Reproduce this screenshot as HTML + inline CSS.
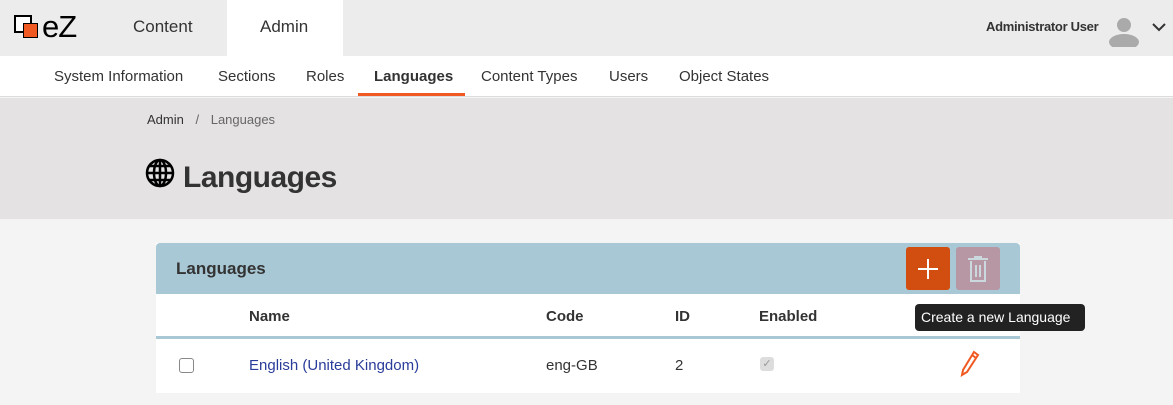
<!DOCTYPE html>
<html><head><style>
*{box-sizing:border-box;margin:0;padding:0}
body{width:1173px;height:405px;overflow:hidden;background:#f4f4f4;font-family:"Liberation Sans",sans-serif;color:#333;position:relative}
.top{position:absolute;left:0;top:0;width:1173px;height:56px;background:#ececec}
.a{position:absolute}
.sub{position:absolute;top:56px;left:0;width:1173px;height:41px;background:#fff;border-bottom:1px solid #ddd}
.sub span{position:absolute;top:12px;font-size:15px;color:#333}
.hdr{position:absolute;top:98px;left:0;width:1173px;height:121px;background:#e4e2e3}
.panel{position:absolute;left:156px;top:243px;width:864px;height:150px;background:#fff}
</style></head><body>
<div class="top"></div>
<div class="a" style="left:14px;top:15px;width:18px;height:18px;border:2px solid #000;background:#fff"></div>
<div class="a" style="left:23px;top:23px;width:15px;height:15px;background:#f05a22;border:1px solid #000"></div>
<div class="a" style="left:42px;top:9px;font-size:31px;color:#000;letter-spacing:-1px">eZ</div>
<div class="a" style="left:133px;top:17px;font-size:17px;color:#333">Content</div>
<div class="a" style="left:227px;top:0;width:116px;height:56px;background:#fff"></div>
<div class="a" style="left:260px;top:17px;font-size:17px;color:#333">Admin</div>
<div class="a" style="left:986px;top:19px;font-size:13px;font-weight:bold;color:#333;letter-spacing:-0.3px">Administrator User</div>
<svg class="a" style="left:1107px;top:16px" width="34" height="31"><circle cx="17" cy="9" r="7" fill="#aaa"/><ellipse cx="17" cy="26" rx="15" ry="8" fill="#aaa"/></svg>
<svg class="a" style="left:1151px;top:21px" width="16" height="12"><path d="M2 3l6 6 6-6" stroke="#333" stroke-width="2" fill="none"/></svg>
<div class="sub">
<span style="left:54px">System Information</span><span style="left:218px">Sections</span><span style="left:306px">Roles</span>
<span style="left:374px;font-weight:bold">Languages</span><span style="left:481px">Content Types</span><span style="left:609px">Users</span><span style="left:679px">Object States</span>
<div class="a" style="left:358px;top:37px;width:107px;height:3px;background:#f05a22"></div>
</div>
<div class="hdr">
<div class="a" style="left:147px;top:14px;font-size:13px;color:#333">Admin <span style="color:#666;margin:0 8px">/</span> <span style="color:#666">Languages</span></div>
<svg class="a" style="left:145px;top:60px" width="30" height="30" viewBox="0 0 30 30"><g fill="none" stroke="#000" stroke-width="2.5"><circle cx="15" cy="15" r="13"/><ellipse cx="15" cy="15" rx="6" ry="13"/><path d="M15 2v26M2 15h26M4 8h22M4 22h22"/></g></svg>
<div class="a" style="left:183px;top:63px;font-size:30px;font-weight:bold;color:#333;letter-spacing:-0.5px">Languages</div>
</div>
<div class="panel">
<div class="a" style="left:0;top:0;width:864px;height:51px;background:#a8c8d5;border-radius:4px 4px 0 0"></div>
<div class="a" style="left:20px;top:16px;font-size:17px;font-weight:bold;color:#333">Languages</div>
<div class="a" style="left:750px;top:4px;width:44px;height:43px;background:#d24d10;border-radius:3px"></div>
<svg class="a" style="left:760px;top:14px" width="24" height="24"><path d="M12 2v20M2 12h20" stroke="#fff" stroke-width="2"/></svg>
<div class="a" style="left:800px;top:4px;width:44px;height:43px;background:#b897a5;border-radius:3px"></div>
<svg class="a" style="left:810px;top:12px" width="24" height="28"><g stroke="#cbd9de" stroke-width="2" fill="none"><path d="M2 4h20M9 4V2h6v2M5 6v20h14V6M10 10v12M14 10v12"/></g></svg>
<div class="a" style="left:93px;top:65px;font-size:15px;font-weight:bold">Name</div>
<div class="a" style="left:390px;top:65px;font-size:15px;font-weight:bold">Code</div>
<div class="a" style="left:519px;top:65px;font-size:15px;font-weight:bold">ID</div>
<div class="a" style="left:603px;top:65px;font-size:15px;font-weight:bold">Enabled</div>
<div class="a" style="left:0;top:93px;width:864px;height:3px;background:#a8c8d5"></div>
<div class="a" style="left:23px;top:115px;width:15px;height:15px;border:1px solid #888;border-radius:3px;background:#fff"></div>
<div class="a" style="left:93px;top:114px;font-size:15px;color:#2a3c9a">English (United Kingdom)</div>
<div class="a" style="left:390px;top:114px;font-size:15px">eng-GB</div>
<div class="a" style="left:519px;top:114px;font-size:15px">2</div>
<div class="a" style="left:604px;top:114px;width:14px;height:14px;border-radius:3px;background:#ddd;color:#999;font-size:11px;text-align:center;line-height:14px">✓</div>
<svg class="a" style="left:800px;top:106px" width="24" height="28"><path d="M18 3l4 3-11 17-5 3 1-5z M16 6l4 3" stroke="#f05a22" stroke-width="2" fill="none"/></svg>
</div>
<div class="a" style="left:915px;top:304px;width:170px;height:27px;background:#222;border-radius:4px;color:#fff;font-size:14px;line-height:27px;padding-left:6px">Create a new Language</div>
</body></html>
